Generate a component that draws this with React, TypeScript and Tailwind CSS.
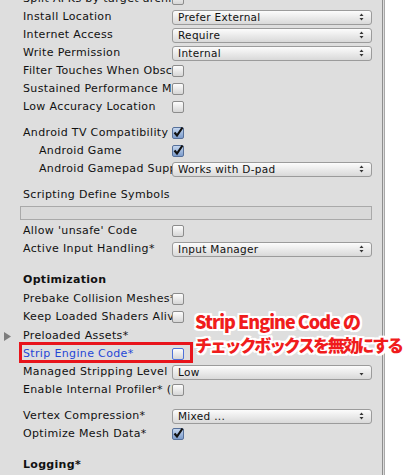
import React from "react";

const font = "font-['DejaVu_Sans',_'Liberation_Sans',_sans-serif]";

const Arrows = ({ single = false }: { single?: boolean }) => (
  <svg width="5" height="8" viewBox="0 0 5 8" className="ml-auto mr-[7px] shrink-0">
    {!single && <path d="M0.5 3 L2.5 0.5 L4.5 3 Z" fill="#333" />}
    <path d="M0.5 5 L2.5 7.5 L4.5 5 Z" fill="#333" />
  </svg>
);

const Dropdown = ({ value, single }: { value: string; single?: boolean }) => (
  <div className="flex items-center h-[15px] w-[200px] rounded-[3px] border border-[#9b9b9b] bg-gradient-to-b from-[#fcfcfc] to-[#d9d9d9] pl-[5px] text-[10.5px] tracking-[0.3px] text-[#111] leading-none">
    <span>{value}</span>
    <Arrows single={single} />
  </div>
);

const Check = ({ on = false, focus = false }: { on?: boolean; focus?: boolean }) =>
  on ? (
    <div className="relative w-[12px] h-[12px] rounded-[2px] border border-[#56709a] bg-gradient-to-b from-[#c4d6ee] to-[#7d9ccb]">
      <svg width="12" height="12" viewBox="0 0 12 12" className="absolute -left-px -top-[2px]">
        <path d="M2.5 6.5 L5 9.5 L10.5 1.5" stroke="#111" strokeWidth="2.2" fill="none" />
      </svg>
    </div>
  ) : (
    <div
      className={`w-[12px] h-[12px] rounded-[2px] border bg-gradient-to-b from-[#fdfdfd] to-[#d6d6d6] ${
        focus ? "border-[#4f72d9]" : "border-[#8c8c8c]"
      }`}
    />
  );

type RowProps = {
  label: string;
  indent?: boolean;
  blue?: boolean;
  foldout?: boolean;
  children?: React.ReactNode;
  className?: string;
};

const Row = ({ label, indent, blue, foldout, children, className = "" }: RowProps) => (
  <div className={`relative flex items-center h-[18px] ${className}`}>
    {foldout && (
      <svg width="8" height="9" viewBox="0 0 8 9" className="absolute left-[3px] top-[5px]">
        <path d="M0 0 L7 4.5 L0 9 Z" fill="#7d7d7d" />
      </svg>
    )}
    <div
      className={`w-[171px] shrink-0 overflow-hidden whitespace-nowrap text-[11px] tracking-[0.35px] ${
        indent ? "pl-[38px]" : "pl-[22px]"
      } ${blue ? "text-[#2546d6]" : "text-[#111]"}`}
    >
      {label}
    </div>
    <div className="flex items-center">{children}</div>
  </div>
);

const Heading = ({ text, className = "" }: { text: string; className?: string }) => (
  <div className={`h-[18px] flex items-center pl-[22px] text-[11px] tracking-[0.3px] font-bold text-[#111] ${className}`}>
    {text}
  </div>
);

export default function App() {
  return (
    <div className={`relative w-[405px] h-[475px] overflow-hidden bg-white ${font}`}>
      <div className="flex h-full w-[385px]">
        <div className="w-[2px] bg-[#dedede]" />
        <div className="w-px bg-[#a3a3a3]" />
        <div className="flex-1 bg-[#dedede] -ml-[3px]">
          <div className="-mt-[10px] pl-[1px]">
            <Row label="Split APKs by target architecture">
              <Check />
            </Row>
            <Row label="Install Location">
              <Dropdown value="Prefer External" />
            </Row>
            <Row label="Internet Access">
              <Dropdown value="Require" />
            </Row>
            <Row label="Write Permission">
              <Dropdown value="Internal" />
            </Row>
            <Row label="Filter Touches When Obscured">
              <Check />
            </Row>
            <Row label="Sustained Performance Mode">
              <Check />
            </Row>
            <Row label="Low Accuracy Location">
              <Check />
            </Row>

            <Row label="Android TV Compatibility" className="mt-[8px]">
              <Check on />
            </Row>
            <Row label="Android Game" indent>
              <Check on />
            </Row>
            <Row label="Android Gamepad Support Level" indent>
              <Dropdown value="Works with D-pad" />
            </Row>

            <Row label="Scripting Define Symbols" className="mt-[8px]" />
            <div className="ml-[19px] mt-[2px] h-[14px] w-[352px] border border-[#a9a9a9] bg-[#d9d9d9]" />
            <Row label="Allow 'unsafe' Code" className="mt-[2px]">
              <Check />
            </Row>
            <Row label="Active Input Handling*">
              <Dropdown value="Input Manager" />
            </Row>

            <Heading text="Optimization" className="mt-[13px]" />
            <Row label="Prebake Collision Meshes*" className="mt-px">
              <Check />
            </Row>
            <Row label="Keep Loaded Shaders Alive*">
              <Check />
            </Row>
            <Row label="Preloaded Assets*" foldout className="mt-px" />
            <Row label="Strip Engine Code*" blue>
              <Check focus />
            </Row>
            <Row label="Managed Stripping Level">
              <Dropdown value="Low" single />
            </Row>
            <Row label="Enable Internal Profiler* (Deprecated)">
              <Check />
            </Row>

            <Row label="Vertex Compression*" className="mt-[8px]">
              <Dropdown value="Mixed ..." />
            </Row>
            <Row label="Optimize Mesh Data*">
              <Check on />
            </Row>

            <Heading text="Logging*" className="mt-[13px]" />
          </div>
        </div>
        <div className="w-px bg-[#8e8e8e]" />
        <div className="w-px bg-[#dcdcdc]" />
        <div className="w-px bg-[#a8a8a8]" />
      </div>

      {/* callout */}
      <div className="absolute left-[19px] top-[342px] w-[174px] h-[21px] border-[3px] border-[#e8141b]" />
      <div className="absolute left-[195px] top-[309px] font-['Noto_Sans_CJK_JP',_sans-serif] font-black leading-[24px] text-[#f01c1c] whitespace-nowrap [text-shadow:2px_0_0_#fff,-2px_0_0_#fff,0_2px_0_#fff,0_-2px_0_#fff,2px_2px_0_#fff,-2px_-2px_0_#fff,2px_-2px_0_#fff,-2px_2px_0_#fff]">
        <div className="text-[18px] tracking-[-1px]">Strip Engine Code の</div>
        <div className="text-[17px] tracking-[-2.2px]">チェックボックスを無効にする</div>
      </div>
    </div>
  );
}
